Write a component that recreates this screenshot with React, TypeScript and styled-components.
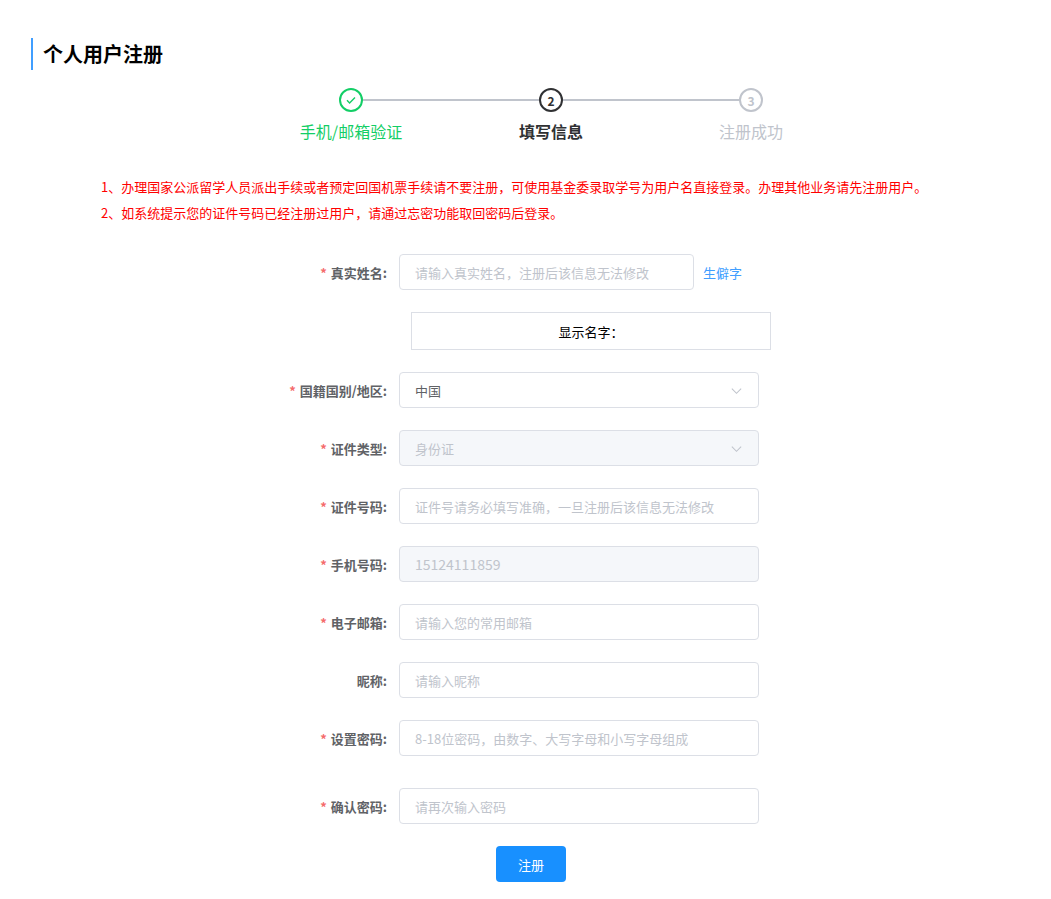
import React from "react";
import styled, { createGlobalStyle } from "styled-components";

const Global = createGlobalStyle`
  body { margin: 0; background: #fff; font-family: "Microsoft YaHei", "Noto Sans CJK SC", sans-serif; }
`;

const Page = styled.div`padding: 38px 0 0 31px; width: 1020px; box-sizing: border-box;`;
const Title = styled.h1`
  margin: 0; border-left: 2px solid #409eff; padding-left: 10px;
  font-size: 20px; font-weight: bold; color: #000; line-height: 32px; height: 32px;
`;
const Steps = styled.div`display: flex; margin: 18px 0 0 220px; width: 600px;`;
const Step = styled.div`flex: 0 0 200px; display: flex; flex-direction: column; align-items: center; position: relative;`;
const Line = styled.div`position: absolute; top: 11px; left: 111px; width: 178px; height: 2px; background: #c0c4cc;`;
const Circle = styled.div<{ c: string }>`
  width: 20px; height: 20px; border: 2px solid ${p => p.c}; border-radius: 50%;
  display: flex; align-items: center; justify-content: center; color: ${p => p.c};
  font-size: 12px; font-weight: bold; background: #fff; position: relative; z-index: 1;
`;
const StepLabel = styled.div<{ c: string; b?: boolean }>`
  margin-top: 8px; font-size: 16px; color: ${p => p.c}; font-weight: ${p => (p.b ? "bold" : "normal")}; line-height: 22px;
`;
const Notice = styled.div`margin: 32px 0 0 70px; color: #f00; font-size: 13px; line-height: 26px;`;
const Form = styled.div`margin-top: 28px; display: flex; flex-direction: column;`;
const Row = styled.div<{ mb?: number }>`display: flex; align-items: center; margin-bottom: ${p => p.mb ?? 22}px;`;
const Label = styled.div`
  width: 368px; text-align: right; padding-right: 12px; box-sizing: border-box;
  font-size: 13px; font-weight: bold; color: #606266;
`;
const Star = styled.span`color: #f56c6c; margin-right: 4px;`;
const Input = styled.div<{ w?: number; disabled?: boolean; ph?: boolean }>`
  width: ${p => p.w ?? 360}px; height: 36px; box-sizing: border-box; border: 1px solid #dcdfe6;
  border-radius: 4px; padding: 0 15px; display: flex; align-items: center; justify-content: space-between;
  font-size: 13px; background: ${p => (p.disabled ? "#f5f7fa" : "#fff")};
  color: ${p => (p.ph ? "#c0c4cc" : "#606266")};
`;
const Display = styled.div`
  margin-left: 380px; width: 360px; height: 38px; box-sizing: border-box; border: 1px solid #dcdfe6;
  display: flex; align-items: center; justify-content: center; font-size: 13px; color: #000;
`;
const Link = styled.span`color: #409eff; font-size: 13px; margin-left: 9px;`;
const Button = styled.button`
  margin-left: 465px; width: 70px; height: 36px; border: none; border-radius: 4px;
  background: #1890ff; color: #fff; font-size: 13px; font-family: inherit;
`;

const Chevron = () => (
  <svg width="13" height="13" viewBox="0 0 14 14"><path d="M2 5l5 5 5-5" fill="none" stroke="#c0c4cc" strokeWidth="1.1" /></svg>
);

const field = (label: string, content: React.ReactNode, req = true, mb?: number) => (
  <Row mb={mb}>
    <Label>{req && <Star>*</Star>}{label}:</Label>
    {content}
  </Row>
);

export default function App() {
  return (
    <Page>
      <Global />
      <Title>个人用户注册</Title>
      <Steps>
        <Step>
          <Line />
          <Circle c="#13ce66">
            <svg width="12" height="12" viewBox="0 0 12 12"><path d="M2 6.3l2.6 2.6L10 3.5" fill="none" stroke="#13ce66" strokeWidth="1.4" /></svg>
          </Circle>
          <StepLabel c="#13ce66">手机/邮箱验证</StepLabel>
        </Step>
        <Step>
          <Line />
          <Circle c="#303133">2</Circle>
          <StepLabel c="#303133" b>填写信息</StepLabel>
        </Step>
        <Step>
          <Circle c="#c0c4cc">3</Circle>
          <StepLabel c="#c0c4cc">注册成功</StepLabel>
        </Step>
      </Steps>
      <Notice>
        <div>1、办理国家公派留学人员派出手续或者预定回国机票手续请不要注册，可使用基金委录取学号为用户名直接登录。办理其他业务请先注册用户。</div>
        <div>2、如系统提示您的证件号码已经注册过用户，请通过忘密功能取回密码后登录。</div>
      </Notice>
      <Form>
        {field("真实姓名", <><Input w={295} ph>请输入真实姓名，注册后该信息无法修改</Input><Link>生僻字</Link></>)}
        <Row><Display>显示名字：</Display></Row>
        {field("国籍国别/地区", <Input>中国<Chevron /></Input>)}
        {field("证件类型", <Input disabled ph>身份证<Chevron /></Input>)}
        {field("证件号码", <Input ph>证件号请务必填写准确，一旦注册后该信息无法修改</Input>)}
        {field("手机号码", <Input disabled ph style={{ fontSize: 14 }}>15124111859</Input>)}
        {field("电子邮箱", <Input ph>请输入您的常用邮箱</Input>)}
        {field("昵称", <Input ph>请输入昵称</Input>, false)}
        {field("设置密码", <Input ph>8-18位密码，由数字、大写字母和小写字母组成</Input>, true, 32)}
        {field("确认密码", <Input ph>请再次输入密码</Input>)}
        <Row><Button>注册</Button></Row>
      </Form>
    </Page>
  );
}
